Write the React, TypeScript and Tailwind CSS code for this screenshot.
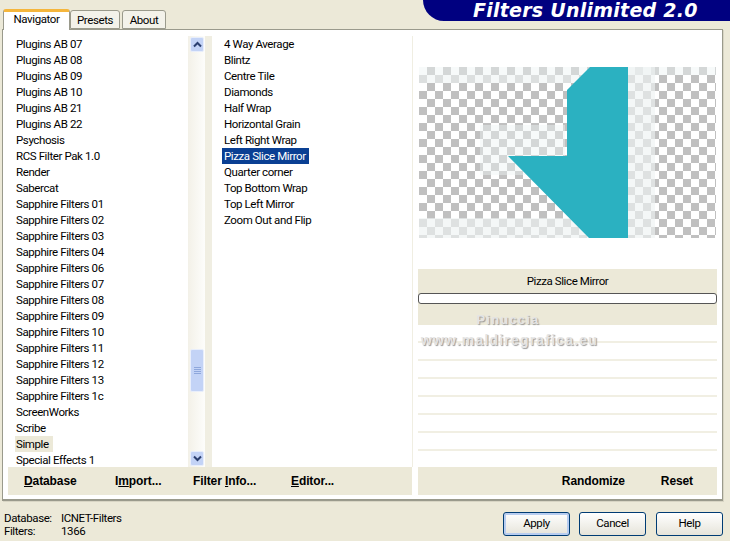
const plugins = [
  'Plugins AB 07',
  'Plugins AB 08',
  'Plugins AB 09',
  'Plugins AB 10',
  'Plugins AB 21',
  'Plugins AB 22',
  'Psychosis',
  'RCS Filter Pak 1.0',
  'Render',
  'Sabercat',
  'Sapphire Filters 01',
  'Sapphire Filters 02',
  'Sapphire Filters 03',
  'Sapphire Filters 04',
  'Sapphire Filters 06',
  'Sapphire Filters 07',
  'Sapphire Filters 08',
  'Sapphire Filters 09',
  'Sapphire Filters 10',
  'Sapphire Filters 11',
  'Sapphire Filters 12',
  'Sapphire Filters 13',
  'Sapphire Filters 1c',
  'ScreenWorks',
  'Scribe',
  'Simple',
  'Special Effects 1',
]

const filters = [
  '4 Way Average',
  'Blintz',
  'Centre Tile',
  'Diamonds',
  'Half Wrap',
  'Horizontal Grain',
  'Left Right Wrap',
  'Pizza Slice Mirror',
  'Quarter corner',
  'Top Bottom Wrap',
  'Top Left Mirror',
  'Zoom Out and Flip',
]

const Chevron = ({ up }: { up?: boolean }) => (
  <svg width="9" height="7" viewBox="0 0 9 7">
    <path
      d={up ? 'M1 5.5 L4.5 2 L8 5.5' : 'M1 1.5 L4.5 5 L8 1.5'}
      fill="none"
      stroke="#2b3f70"
      strokeWidth="2"
    />
  </svg>
)

const ScrollButton = ({ up }: { up?: boolean }) => (
  <div className="w-[14px] h-[15px] rounded-[2px] flex items-center justify-center bg-[#c3d3f6] border border-[#e8eefb]">
    <Chevron up={up} />
  </div>
)

const Preview = () => (
  <svg width="297" height="171" viewBox="0 0 297 171" className="ml-[1px] block">
    <defs>
      <pattern id="checker" width="16" height="16" patternUnits="userSpaceOnUse">
        <rect width="16" height="16" fill="#ffffff" />
        <rect x="8" width="8" height="8" fill="#c0c0c0" />
        <rect y="8" width="8" height="8" fill="#c0c0c0" />
      </pattern>
    </defs>
    <rect width="297" height="171" fill="url(#checker)" />
    <rect width="297" height="8" fill="#eef3f3" opacity="0.45" />
    <rect y="8" width="171" height="8" fill="#eef3f3" opacity="0.6" />
    <rect x="61" y="58" width="85" height="50" fill="#eef3f3" opacity="0.45" />
    <rect x="209" width="27" height="171" fill="#eef3f3" opacity="0.65" />
    <rect y="151" width="171" height="20" fill="#eef3f3" opacity="0.65" />
    <polygon points="171,0 209,0 209,171 170,171 89,89 148,89 148,23" fill="#2bb1c1" />
  </svg>
)

const App = () => {
  return (
    <div className="w-[730px] h-[541px] flex flex-col bg-[#ece9d8] overflow-hidden text-[11.5px] tracking-[-0.4px] text-black font-['Roboto',sans-serif]">
      <div className="h-[29px] flex justify-between">
        <div className="flex items-end pl-[3px] relative z-10 -mb-[1px]">
          <div className="w-[67px] h-[21px] bg-white border-x border-[#9a9a8c] border-t-[3px] border-t-[#f5b63c] rounded-t-[3px] text-center leading-[15px]">
            Navigator
          </div>
          <div className="w-[50px] h-[19px] mb-[1px] bg-[#f3f2ea] border border-[#9a9a8c] rounded-t-[3px] text-center leading-[18px]">
            Presets
          </div>
          <div className="w-[44px] h-[19px] mb-[1px] ml-[2px] bg-[#f3f2ea] border border-[#9a9a8c] rounded-t-[3px] text-center leading-[18px]">
            About
          </div>
        </div>
        <div className="w-[307px] h-[21px] bg-[#000080] rounded-bl-[28px] pl-[50px] text-white italic font-bold text-[19px] leading-[21px] tracking-[0.25px] font-['DejaVu_Sans',sans-serif] whitespace-nowrap">
          Filters Unlimited 2.0
        </div>
      </div>

      <div className="ml-[2px] w-[721px] h-[472px] flex flex-col bg-white border border-[#9a9a8c] border-b-2 shadow-[1px_1px_0_#d8d5c4]">
        <div className="h-[437px] pt-[6px] flex overflow-hidden relative">
          <div className="ml-[5px] w-[180px] shrink-0">
            {plugins.map(name => (
              <div key={name} className="h-[16px] leading-[16px] whitespace-nowrap">
                <span
                  className={
                    name === 'Simple'
                      ? 'inline-block ml-[7px] pl-[1px] w-[38px] bg-[#ece9d8]'
                      : 'inline-block ml-[7px] pl-[1px]'
                  }>
                  {name}
                </span>
              </div>
            ))}
          </div>
          <div className="w-[17px] shrink-0 h-[431px] pl-[2px] py-[1px] bg-gradient-to-r from-[#f3f1e8] to-[#fdfdfb] flex flex-col justify-between relative">
            <ScrollButton up />
            <ScrollButton />
            <div className="absolute left-[2px] top-[313px] w-[14px] h-[43px] rounded-[2px] bg-[#c3d3f6] border border-[#e8eefb] flex flex-col items-center justify-center gap-[1px]">
              <div className="w-[7px] h-[1px] bg-[#8ea7dc]" />
              <div className="w-[7px] h-[1px] bg-[#8ea7dc]" />
              <div className="w-[7px] h-[1px] bg-[#8ea7dc]" />
              <div className="w-[7px] h-[1px] bg-[#8ea7dc]" />
            </div>
          </div>
          <div className="w-[7px] shrink-0 h-[431px] bg-[#f0eee2]" />
          <div className="w-[200px] shrink-0">
            {filters.map(name => (
              <div key={name} className="h-[16px] leading-[16px] whitespace-nowrap">
                <span
                  className={
                    name === 'Pizza Slice Mirror'
                      ? 'inline-block ml-[10px] pl-[2px] w-[87px] bg-[#0a3f93] text-white'
                      : 'inline-block ml-[10px] pl-[2px]'
                  }>
                  {name}
                </span>
              </div>
            ))}
          </div>
          <div className="w-[1px] shrink-0 h-[431px] bg-[#f0eee2]" />
          <div className="ml-[5px] w-[299px] shrink-0 h-[431px] flex flex-col overflow-hidden">
            <div className="h-[233px] shrink-0 pt-[31px]">
              <Preview />
            </div>
            <div className="h-[56px] shrink-0 bg-[#ece9d8] flex flex-col items-center">
              <div className="h-[24px] leading-[24px]">Pizza Slice Mirror</div>
              <div className="w-full h-[11px] bg-white border border-[#555] rounded-[3px]" />
            </div>
            <div className="flex flex-col">
              {[0, 1, 2, 3, 4, 5, 6, 7].map(i => (
                <div key={i} className="h-[18px] shrink-0 bg-white border-b-2 border-[#f1efe3]" />
              ))}
            </div>
          </div>
          <div className="absolute left-[415px] top-[280px] w-[183px] text-center text-[#e4e4e4] font-['Liberation_Sans',sans-serif] font-bold tracking-[1px] leading-[20px] [text-shadow:1px_1px_1px_#9a9a9a]">
            <div className="pr-[3px] text-[13px] tracking-[1.2px]">Pinuccia</div>
            <div className="text-[14px] tracking-[1.2px] whitespace-nowrap">www.maldiregrafica.eu</div>
          </div>
        </div>
        <div className="h-[29px] flex font-bold tracking-[-0.1px] font-['Liberation_Sans',sans-serif] text-[12px] bg-white">
          <div className="ml-[5px] w-[404px] h-[28px] bg-[#ece9d8] flex items-center pl-[16px]">
            <span className="w-[91px]">
              <u>D</u>atabase
            </span>
            <span className="w-[78px]">
              I<u>m</u>port...
            </span>
            <span className="w-[98px]">
              Filter <u>I</u>nfo...
            </span>
            <span>
              <u>E</u>ditor...
            </span>
          </div>
          <div className="ml-[6px] w-[299px] h-[28px] bg-[#ece9d8] flex items-center justify-end pr-[24px]">
            <span className="w-[99px]">Randomize</span>
            <span>Reset</span>
          </div>
        </div>
      </div>

      <div className="flex-1 flex items-start justify-between pl-[4px] pr-[7px]">
        <div className="grid grid-cols-[57px_auto] mt-[11px] leading-[13px]">
          <span>Database:</span>
          <span>ICNET-Filters</span>
          <span>Filters:</span>
          <span>1366</span>
        </div>
        <div className="flex gap-[9px] mt-[11px]">
          <button className="w-[67px] h-[24px] rounded-[3px] border border-[#003c74] bg-gradient-to-b from-white to-[#e6e4da] shadow-[inset_0_0_0_2px_#b8cdf0]">
            Apply
          </button>
          <button className="w-[67px] h-[24px] rounded-[3px] border border-[#003c74] bg-gradient-to-b from-white to-[#e6e4da]">
            Cancel
          </button>
          <button className="w-[67px] h-[24px] ml-[1px] rounded-[3px] border border-[#003c74] bg-gradient-to-b from-white to-[#e6e4da]">
            Help
          </button>
        </div>
      </div>
    </div>
  )
}

export default App
